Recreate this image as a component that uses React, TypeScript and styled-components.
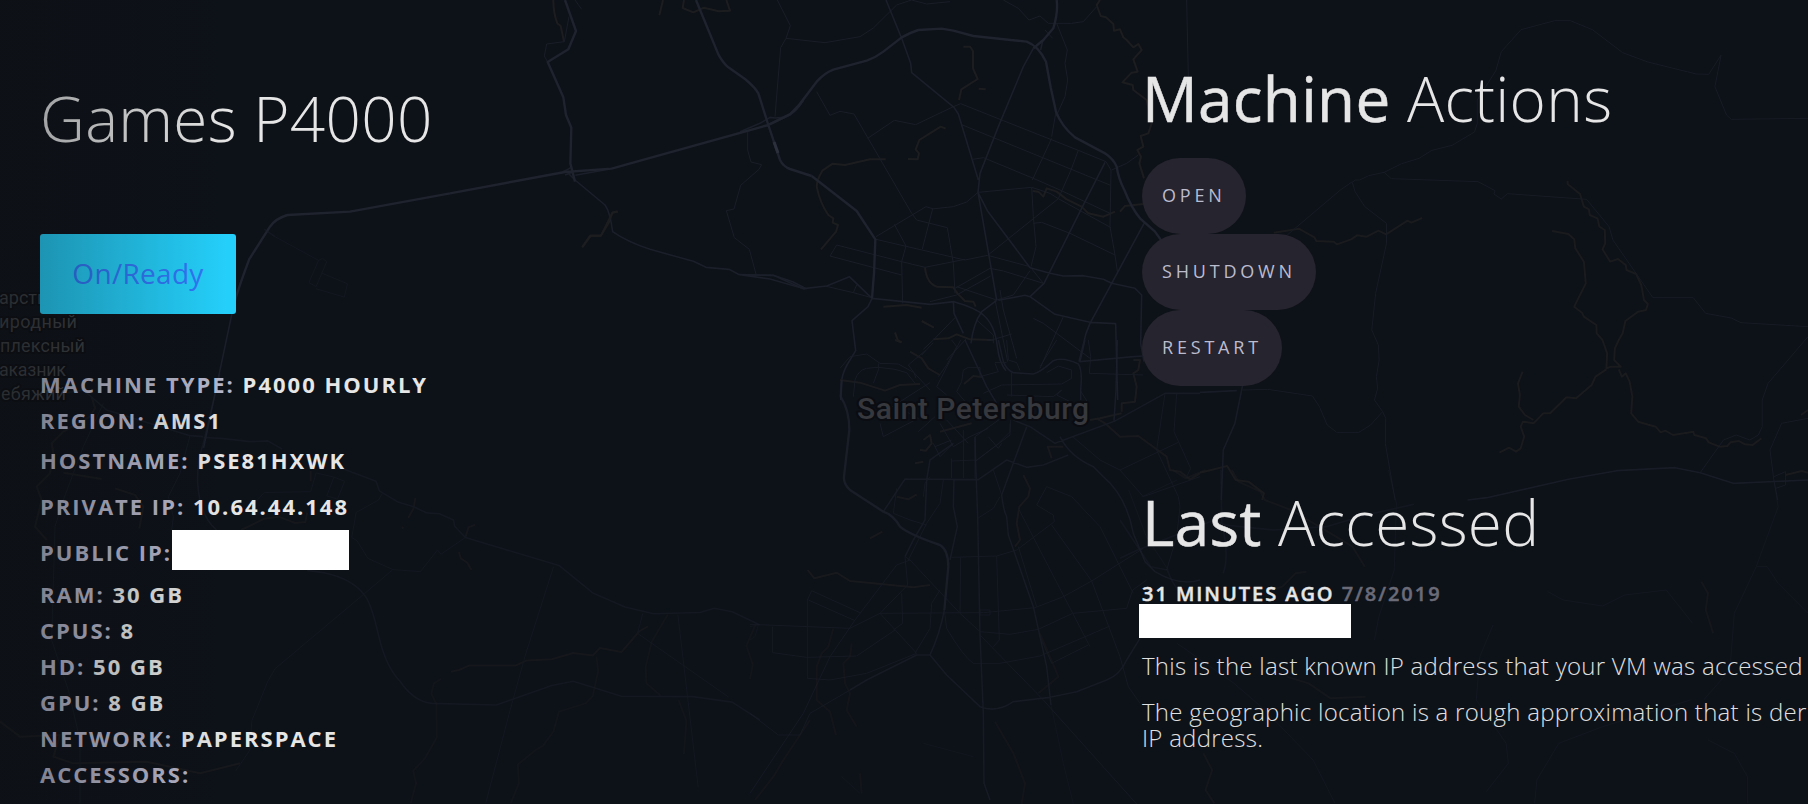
import React from "react";
import styled, { createGlobalStyle } from "styled-components";

const GlobalStyle = createGlobalStyle`
  * { box-sizing: border-box; }
  html, body { margin: 0; padding: 0; background: #0d1118; }
  body { font-family: "Open Sans", "Noto Sans", sans-serif; overflow: hidden; }
`;

const Page = styled.div`
  position: relative;
  display: flex;
  width: 1808px;
  height: 804px;
  overflow: hidden;
  background: #0d1118;
`;

const MapLayer = styled.svg`
  position: absolute;
  inset: 0;
  fill: none;
  stroke-linejoin: round;
  path { vector-effect: non-scaling-stroke; }
`;

const LeftShade = styled.div`
  position: absolute;
  left: 0;
  top: 0;
  bottom: 0;
  width: 230px;
  pointer-events: none;
  background: linear-gradient(to right, rgba(14, 17, 20, 0.38), rgba(14, 17, 20, 0));
`;

const Info = styled.section`
  position: relative;
  width: 1139px;
  padding: 76px 0 0 40px;
`;

const Side = styled.section`
  position: relative;
  width: 669px;
  padding: 56px 0 0 3px;
  overflow: hidden;
`;

const Heading = styled.h1`
  margin: 0;
  font-size: 62px;
  line-height: 84px;
  font-weight: 300;
  letter-spacing: 0.3px;
  color: #e6e6e6;
  white-space: nowrap;
  strong { font-weight: 400; -webkit-text-stroke: 0.5px #e6e6e6; }
`;

const Status = styled.div`
  display: flex;
  align-items: center;
  justify-content: center;
  width: 196px;
  height: 80px;
  margin-top: 74px;
  padding-bottom: 2px;
  border-radius: 3px;
  background: #24d0fb;
  color: #3278fb;
  font-size: 28px;
  letter-spacing: 0.3px;
`;

const Specs = styled.dl`
  margin: 52px 0 0;
`;

const Spec = styled.div<{ $height: number }>`
  display: flex;
  align-items: center;
  height: ${(p) => p.$height}px;
  font-size: 22px;
  font-weight: 700;
  letter-spacing: 2px;
  white-space: pre;
  text-transform: uppercase;
  color: #e6e6e6;
  dt { color: #b7b7cb; }
  dd { margin: 0; }
`;

const Redacted = styled.span<{ $w: number; $h: number }>`
  position: relative;
  z-index: 1;
  display: block;
  width: ${(p) => p.$w}px;
  height: ${(p) => p.$h}px;
  background: #fff;
`;

const PublicIp = styled.span`
  display: block;
  padding-bottom: 5px;
`;

const Actions = styled.div`
  display: flex;
  flex-direction: column;
  align-items: flex-start;
  margin-top: 18px;
`;

const ActionButton = styled.button`
  height: 76px;
  padding: 0 20px 2px;
  border: 0;
  border-radius: 38px;
  background: #26242e;
  color: #bcbccf;
  font: 400 18px/24px "Open Sans", sans-serif;
  letter-spacing: 3.8px;
`;

const Accessed = styled.div`
  margin-top: 94px;
`;

const When = styled.div`
  margin-top: 18px;
  height: 24px;
  font-size: 20px;
  line-height: 24px;
  font-weight: 600;
  letter-spacing: 1.95px;
  text-transform: uppercase;
  color: #e6e6e6;
  white-space: nowrap;
  -webkit-text-stroke: 0.45px currentColor;
  span { color: #6b6b78; }
`;

const AddressSlot = styled.div`
  margin: -2px 0 15px -3px;
`;

const Note = styled.p`
  margin: 0 0 20px;
  font-size: 24px;
  line-height: 26px;
  font-weight: 300;
  letter-spacing: 0.27px;
  color: #e0e0e0;
  white-space: nowrap;
`;

type Tile = {
  x: number;
  y: number;
  sx: number;
  sy: number;
  fade: number;
  major?: string[];
  road?: string[];
  minor?: string[];
  stream?: string[];
};

const tiles: Tile[] = [
  {
    x: 450, y: 0, sx: 3, sy: 3, fade: 1,
    major: [
      "M0 580 L345 516 L485 506 L560 485 L955 375 L1020 343 Q1040 330 1060 300",
      "M345 0 L378 93 L355 148 L293 186 L340 292 L348 345 L364 383 L361 490 L375 545",
      "M738 0 L805 163 Q820 190 835 202 L885 237 Q915 262 925 280 L955 375 L990 480 Q1000 500 1020 507 L1085 528",
    ],
    road: [
      "M345 510 L375 540 L465 615 Q480 635 488 695 Q530 725 600 748 L730 784 L768 802 L837 808 L868 824",
      "M868 824 L970 826 L1028 845 L1070 867",
      "M868 824 L960 837 L1065 867",
      "M376 526 L480 507 M340 516 L362 503 M345 525 L372 515 M340 512 L362 522",
      "M870 395 L930 370 L960 352 L975 354 L1000 352",
    ],
    minor: [
      "M343 125 L290 132 L283 168 L293 186 M343 125 L357 50",
      "M375 0 L395 28",
      "M982 0 L1021 77 L1008 115 L992 143 L975 350",
      "M1008 115 L1125 128 L1230 110 L1270 84 L1340 15 L1385 0 L1430 12 L1500 5",
      "M893 395 L893 450 L903 486 L935 494 L927 508 L872 556 L852 627 L829 632 L853 713 L898 748 L918 822",
      "M1125 858 L1210 878 L1220 855 M1210 878 L1265 893",
    ],
    stream: [
      "M310 0 Q310 40 322 70 L332 78 L342 125",
      "M639 0 L628 46",
      "M702 0 L698 24 L730 37 L762 23 L806 34 L840 32 L829 0",
      "M503 634 L487 638 L478 665 L452 708 L422 708 L397 742",
    ],
  },
  {
    x: 750, y: 0, sx: 3, sy: 3, fade: 1,
    major: [
      "M58 373 L120 343 Q150 315 170 285 L200 245 Q225 218 250 209 L350 182 Q375 174 400 155 L455 112 Q480 98 505 90 L575 86 L610 92 L670 108 L830 125 Q865 138 888 185 L902 262 L918 335 Q935 380 975 412 L1065 460 Q1090 477 1100 500 Q1105 535 1123 570 Q1145 625 1170 655 L1215 695 L1240 730",
      "M920 0 Q925 35 910 85 L880 120 L850 145",
      "M185 528 L320 633 L376 718 L372 820 L366 895",
    ],
    road: [
      "M850 145 L820 200 L745 380 L690 520 L684 577 L712 632 L840 803 M855 140 L878 122 L872 150",
      "M366 895 L354 920 L306 962 L317 1052 L300 1080 Q280 1110 275 1140 L272 1200",
      "M408 0 L455 115 L482 190 L485 218 L612 322 L625 342 L685 540",
      "M684 577 L740 900",
      "M366 895 L540 913 L612 905 Q680 925 700 945 Q735 975 742 1040 Q748 1090 768 1112",
      "M610 905 L612 940 L640 1000",
      "M1185 665 L1085 850 L1020 970 L1008 1000 L987 1085",
      "M745 901 L825 886 L840 890 L915 943 L1020 967 L1097 971 L1103 1200",
      "M840 803 L900 820 L940 828 L1000 827 L1060 838 L1085 850 L1155 865 L1175 885 L1172 1030 L1182 1085",
      "M840 890 L882 850 L990 635 L1065 487",
      "M740 901 L695 935 Q670 970 663 1030",
      "M0 825 L70 826 L160 866 L230 858 L298 830 L366 895",
    ],
    minor: [
      "M684 577 L650 606 L610 620 L545 627",
      "M200 275 L240 346 L270 334 L312 342 L485 640 L500 660 L592 683 L610 790 L615 880",
      "M353 415 L433 361 L497 374 L610 320 L632 311 L760 362 L985 451 L1068 485 L1083 510 L1080 680 L1095 765 L1103 820",
      "M635 374 L878 473 L1082 556",
      "M668 478 L700 473 L850 535 L930 570 L1080 640",
      "M684 577 L845 562 L850 650 L858 740 L843 800",
      "M845 562 L900 580 L925 596 L1083 683",
      "M905 415 L847 540 M918 335 L905 410 M985 451 L963 510 L925 596 L713 766",
      "M713 766 L645 780 L378 718 M713 766 L840 800 L880 850",
      "M378 710 L528 620 L548 626 L517 747 M433 673 L468 738 L455 785 L458 910",
      "M260 735 L455 785 L525 802 L645 778 M260 735 L240 768 L455 825",
      "M615 865 L720 805 L760 813 L880 850 M620 885 L722 828",
      "M540 905 L620 885 M620 860 L740 900",
      "M920 70 L952 150 L945 190 L953 240 L945 290 L918 350",
      "M760 0 L805 25 L837 60 L870 48 L895 70 L965 70 L1000 65 L1040 20 M885 90 L908 115",
      "M850 670 L875 667 L960 700 L1095 765",
      "M1085 510 L1130 490 L1165 465",
      "M750 870 L760 930 L800 1075 M735 900 L773 1085",
      "M940 950 L870 1105 M850 955 L880 970 L920 1000 L1020 1075",
      "M618 950 L550 1020 L520 1048 M650 1015 L590 1080",
      "M680 960 L730 1005 L730 1030 M785 1002 L725 1020",
      "M740 900 L790 885 L840 812",
      "M1310 0 L1315 230",
    ],
    stream: [
      "M640 140 L660 140 L669 153 L669 205 L683 237 L634 268 L627 300 M686 266 L707 268",
      "M587 386 L572 380 L508 420 L497 448 L507 460 L503 478 L474 477",
      "M407 478 L360 478 L285 495 L248 491 L217 512 Q200 540 200 560 Q210 610 235 645 L250 655 L248 668 L264 675 L258 695 L213 748",
      "M525 803 Q530 850 560 860 L610 862 L622 880 L645 903 L670 905 L677 920",
      "M848 573 L865 575 L880 590 L890 565 L920 575 L950 598 L995 620 L1015 640 L1060 650 L1095 635",
      "M1110 635 L1125 618 L1180 612",
      "M1050 0 L1040 15 L1052 48 L1068 52 L1090 72 L1092 92 L1110 88 L1120 112 L1130 120 L1150 142 L1165 132 L1175 150 L1150 178 L1163 215 L1145 218 L1117 247 L1148 255 L1150 270 L1190 300 L1205 370 L1195 400 L1172 408 L1180 440 L1162 450 L1173 470 L1168 490 L1182 535",
      "M515 963 L552 983 M435 997 L443 1020 L455 1027 M400 920 L470 915 L515 923",
      "M550 1018 L595 1015 L620 1003 L660 1018 L725 1020",
    ],
  },
  {
    x: 840, y: 340, sx: 3, sy: 3, fade: 0.9,
    road: [
      "M375 0 L440 140 L470 190",
      "M475 0 L490 65 Q500 90 520 98 L580 102 Q600 98 640 62 Q670 50 715 72 Q728 90 722 150 L722 180",
      "M735 0 L720 65 L880 50 L910 48",
      "M832 0 L828 150 L822 242",
      "M440 0 L462 0",
    ],
    minor: [
      "M0 85 L30 50 L80 42 L120 70 L175 72 L222 98 L228 115",
      "M40 170 L45 120 Q55 90 80 85 L115 82 L165 88 L200 98 L225 130 M115 70 L115 90 L100 130",
      "M280 8 L245 45 L258 30 L205 75 L222 98 L270 150 M362 0 L290 140 L320 165 M335 0 L350 20 L320 75 L295 110",
      "M365 125 L370 90 L385 82 L420 82 L420 110 L475 95 L465 70 M365 125 L350 155 L380 190",
      "M500 0 L505 60 L530 68 L540 92 M465 68 L500 68 M650 0 L600 80",
      "M515 98 L515 170 M430 160 L485 135 L665 132 L695 115 L695 90 L655 78 L620 98 M500 165 L640 170 L665 150 L650 165 L690 185",
      "M745 0 L752 50 L748 100 L910 105 M720 150 L745 190",
      "M120 250 L130 290 L235 235 L190 210 M235 275 L285 230 M110 230 L235 150 L270 128",
      "M280 310 L300 350 L340 310 M285 320 L335 300 M300 250 L340 320 L390 290 L445 265 M320 240 L385 310",
      "M405 290 L405 415 M370 270 L370 415 M335 355 L335 415 M405 290 L490 230 M510 250 L510 285 L405 365",
      "M445 290 L475 325 L485 310",
    ],
    stream: [
      "M165 0 L185 8 M210 35 L245 55 L265 85 L300 105",
      "M372 132 L400 108 L430 112",
      "M0 120 L60 128 L135 152 L180 135 L240 132",
      "M250 300 L270 285 L275 310 L258 332 L240 330 M225 370 L250 365 M300 275 L350 262 L395 250",
      "M880 60 L900 60 L895 90 L880 100 L890 140 L885 185 L845 190 L845 215 M750 240 L780 235 L845 220",
    ],
  },
  {
    x: 750, y: 380, sx: 3, sy: 3, fade: 0.72,
    major: [
      "M275 0 L272 50 Q298 90 298 150 L282 290 Q280 310 300 330 L400 395 Q430 405 450 440 Q480 465 570 495 Q595 510 595 560 L583 690",
    ],
    road: [
      "M583 690 Q570 760 540 825 L500 825 L350 900 L300 930",
      "M540 825 L590 885 L690 980 Q740 1000 790 965 L900 952 L980 935 L1070 900 Q1110 885 1130 840 L1170 775",
      "M400 395 L465 297 L685 299 L770 240 L830 262 L880 255 L955 225",
      "M675 170 L677 250 L683 410 L690 765 L700 1000 L702 1210 L720 1260",
      "M465 530 L490 480 L525 420 L530 300 L540 240 L610 190",
      "M612 297 L610 380 L622 440 L600 540",
      "M830 140 L755 345 Q760 390 770 410 L775 465 L850 680 L890 860 L903 975",
      "M790 120 L840 140 L915 190 L1093 124 L1245 40 L1350 40",
      "M930 170 Q960 230 1030 260 L1060 290 Q1130 350 1150 460 L1185 545 L1215 575 Q1290 620 1350 600",
    ],
    minor: [
      "M465 530 L473 615 L390 700 L300 745 L0 733",
      "M805 500 L860 680 M390 700 L700 698 L855 683 L940 650 L1025 603 L1180 505",
      "M0 1000 L85 1065 L150 1065 L180 1000 L300 930",
      "M690 765 L880 960 L1160 1272",
      "M583 690 L590 745 Q640 830 670 850 L750 850 L870 828 L1080 738",
      "M0 1240 L160 1000 L240 830 L315 720 L440 555 L480 540 L465 530",
      "M480 540 L630 700 L690 755 L780 763 L865 748 L968 700 L1130 685 L1148 630 L1190 600",
      "M605 532 L740 528 L800 510 L913 425 L910 405 L860 375 L890 320 L965 350 L1050 440 L1150 640",
      "M740 528 L748 780 L730 800 M632 532 L630 700",
      "M683 415 L730 385 L750 350 M730 270 L755 345",
      "M185 632 L330 698 M185 632 L172 660 L172 895 L240 900 L350 880 L500 820",
      "M175 660 L315 722 M68 740 L68 818 L170 832 L320 828 L435 750",
      "M390 700 L500 820 M455 640 L458 730 L430 750 M570 630 L545 670 L540 745 L495 820",
      "M805 385 L1020 800 M905 435 L1025 603 L1110 830 L1135 920 L1170 970",
      "M968 170 L1050 240 L1110 270 L1285 187 M1110 270 L1180 350 L1350 290",
      "M1245 40 L1220 210 L1285 350 L1290 380 L1280 470 L1250 570",
      "M1280 40 L1272 155 L1322 265 L1310 290",
      "M605 243 L680 240 L740 195 L780 155 L782 120",
      "M440 325 L430 400 L480 420 L530 435 M520 350 L525 310 L540 290 M580 300 L570 370 L530 430 L475 540",
      "M690 690 L720 690 L720 705 L690 705 Z M868 765 L905 850 L1015 795",
    ],
    stream: [
      "M440 350 L475 358 L500 343 M360 475 L397 455",
      "M820 285 L840 325 L835 350 L808 380 L800 430 L810 480 L795 500",
      "M173 570 L193 595 L260 578 L300 603 L370 610 L490 622 L540 615",
      "M1040 115 L1065 130 L1110 170 L1165 168 L1250 230 L1260 270 L1290 275 L1320 298 L1350 280",
      "M905 235 L893 200 L940 200",
    ],
  },
  {
    x: 750, y: 380, sx: 3, sy: 3, fade: 0.4,
    minor: [
      "M0 740 L25 735 L15 770 L0 780 M275 1190 L330 1240",
      "M900 960 L940 1150 L970 1272 M520 1090 L670 1130",
    ],
    stream: [
      "M250 745 L235 800 L215 820 L200 860 L200 960 L240 995 L258 1065",
      "M305 790 L300 830 L280 850 L285 910 L300 940 L290 990 L320 1040",
      "M870 760 L925 890 L865 940 M735 1025 L790 1120 L825 1210 L815 1272",
      "M180 1020 L100 1140 L70 1190 L15 1260 M330 1180 L335 1240",
    ],
  },
  {
    x: 1200, y: 0, sx: 2.579, sy: 3, fade: 0.85,
    road: [
      "M690 1500 L740 1493 L950 1438 L1075 1412 L1225 1403 L1290 1418 L1375 1450 L1568 1440",
      "M110 1155 L90 1270 L60 1350 L55 1500 M0 1177 L95 1172",
    ],
    minor: [
      "M393 545 L362 570 L225 705 L160 740 L80 900",
      "M1568 355 L1370 358 L1358 345 L1328 260 L1344 165 L1312 223 L1280 222 L1155 186 L1090 158 L1012 89 L955 62 L915 62 L828 89 L777 155 L763 212 L715 300 L715 370 L708 396 L650 436 L598 451 L565 475 L520 491 L475 517 L435 527 L412 540 L400 540 L393 548 L400 575 L425 620 L481 670 L481 730 L453 880 L443 990 L460 1035 L462 1080 L455 1130 L458 1165 L450 1200 L471 1235 L479 1255 L478 1330 L503 1500",
      "M475 517 L493 536 L717 545 L761 572 L758 582 L777 597 L793 581 L997 598 L1055 680 L1065 720 L1168 893 L1272 893 L1304 940 L1370 954 L1395 968 L1568 980",
      "M1568 1010 L1465 1150 L1450 1200 L1450 1280 L1440 1305 L1418 1320 L1383 1305 L1350 1320 L1290 1418",
      "M110 1170 L175 1168 L290 1188 L308 1220 L328 1275 L353 1297 L410 1297 L440 1275 L471 1235",
      "M1568 1255 L1500 1270 L1470 1350 L1480 1440 L1490 1500 M1480 1430 L1510 1415 L1510 1455 L1485 1465",
    ],
    stream: [
      "M190 698 L255 686 L295 712 L300 723 L345 725 L353 733 L390 718 L405 706 L430 710 L460 692 L480 703 L535 662 L545 668 L573 654",
      "M948 542 L948 552 L980 582 L990 620 L1003 628 L1005 645 L1025 655 L1030 680 L1044 690 L1045 730 L1038 748 L1058 785 L1078 777 L1098 795 L1100 810 L1125 822 L1138 855 L1145 900 L1155 912 L1150 930 L1130 935 L1097 963 L1090 1000 L1080 1020 L1070 1045 L1068 1080 L1085 1100 L1060 1100 L1048 1105 L1050 1060 L1038 1020 L1023 1000 L1022 975 L990 950 L985 938 L965 920 L995 850 L990 785 L968 745 L965 718 L950 702 L908 693",
      "M1048 1108 L1020 1130 L1010 1155 L970 1195 L945 1192 L903 1240 L885 1240 L860 1270 L833 1265 L827 1280 L836 1310 L827 1345 L815 1355 L797 1343 L772 1358 M860 1260 L838 1245 L822 1220 L825 1185 L820 1150 L832 1115",
      "M1080 1108 L1088 1130 L1098 1120 L1108 1145 L1115 1190 L1112 1240 L1130 1265 L1175 1280 L1188 1297 L1200 1292 L1220 1305 L1272 1295 L1275 1305 L1305 1315 L1312 1327 L1340 1340 L1360 1338 L1368 1327 L1390 1323 L1405 1333 L1425 1335 L1448 1315",
      "M0 1418 L70 1398 L92 1440 L125 1445 L165 1480 L160 1500 M1550 1245 L1568 1230 M1510 1425 L1552 1413 L1568 1418",
    ],
  },
  {
    x: 1120, y: 470, sx: 2.279, sy: 3, fade: 0.5,
    road: [
      "M240 165 L350 180 L470 170 L560 135 L670 103",
      "M230 0 L232 160 Q250 260 235 310 M0 265 L40 240 L215 150 L240 165",
      "M0 150 L70 290 L108 300 Q130 380 170 395",
    ],
    minor: [
      "M612 0 L630 100 L625 300 L590 440 L580 510",
      "M1490 30 L1500 110 L1450 290 L1475 290 L1500 340 L1568 430 M1450 290 L1400 430 L1390 600 L1330 690",
      "M975 365 L1010 390 L1100 408 L1150 375 L1245 360 L1305 460",
      "M850 465 L820 560 L812 690 L880 820 L885 880 L835 965",
      "M1300 690 L1100 770 L1000 820 L950 930 L945 1000",
      "M1340 810 L1400 850 L1430 920 L1430 1000 M130 520 L260 640 L330 720 L440 870 L490 1000",
      "M20 60 L60 200 L110 300 M50 80 L130 30",
    ],
    stream: [
      "M120 0 L150 25 L195 0 M255 0 L270 35 L320 65 L330 90 L390 120 L480 190 L530 230 L558 290",
      "M425 305 L400 310 L370 350 L345 360 M1325 335 L1340 370 L1335 420 L1352 490",
      "M380 620 L430 640 L480 685 L560 680 M190 850 L210 900 L195 960 L215 1000",
    ],
  },
  {
    x: 200, y: 150, sx: 2.8, sy: 2.4, fade: 1,
    major: [
      "M700 104 L420 148 L245 156 Q210 165 195 185 L138 262 Q110 325 95 370",
    ],
    road: ["M95 370 L10 715"],
    stream: ["M1170 148 L1155 150 L1123 205 L1093 205 L1070 233"],
  },
  {
    x: 200, y: 150, sx: 2.8, sy: 2.4, fade: 0.55,
    road: [
      "M300 1009 L350 1015 Q430 1030 462 1070 Q480 1090 500 1165 Q520 1240 560 1275 Q600 1325 650 1328 L830 1332 L985 1285 L1045 1275 L1180 1311 L1380 1312 L1490 1325 L1568 1368",
      "M400 765 L493 795 L502 818 L555 845 L600 857 L635 871 L670 873 L710 888 L713 903 L743 930 L1005 997 L1100 1063 L1190 1097 L1270 1113 L1400 1110 L1440 1100 L1490 1108 L1568 1140",
      "M10 690 L60 692 L140 700 L190 698 L230 718",
      "M180 190 L210 208",
    ],
    minor: [
      "M210 208 L332 265 L305 318 L325 328 L355 268 L343 260 L332 265 M340 295 L413 321 L404 353 L325 333",
      "M425 930 L440 938 L470 980 L540 1007 L617 1012 L665 960 L675 970 L743 930",
      "M540 1007 L460 1065 L210 1245 L190 1275 L145 1370 L140 1440 L100 1490",
      "M325 775 L310 820 L180 822 L150 850 M325 775 L375 785 L355 830 L385 838 L405 795 L375 785 M437 870 L500 840 L510 825 M437 870 L425 930",
      "M990 1000 L910 1215 L865 1355 L800 1568",
      "M1338 1115 L1395 1530 M1240 1112 L1225 1160 L1350 1235 L1480 1313",
    ],
    stream: [
      "M603 835 L598 860 L583 883 M565 905 L570 908 M770 900 L752 905 L743 930 M725 965 L730 980 L748 990 L760 1008",
      "M703 1252 L725 1248 L755 1237 L885 1237 L915 1225 L985 1222 L1045 1207 L1100 1213 L1120 1195 L1180 1205 L1230 1155 L1255 1143",
      "M310 770 L310 795 M115 912 L180 885 L220 880 L265 895 L295 893 L300 870",
    ],
  },
  {
    x: 200, y: 150, sx: 2.8, sy: 2.4, fade: 0.35,
    stream: [
      "M675 1270 L655 1280 L648 1305 L662 1330 L663 1410 L630 1460 L597 1490 L605 1520 L590 1568",
      "M1110 1215 L1115 1250 L1100 1310 L1080 1328 L1005 1348 L990 1395 L960 1430 L940 1440 L890 1475 L893 1520 L870 1568",
      "M1310 1115 L1265 1180 L1248 1240 L1250 1280 L1290 1310 M1340 1320 L1362 1370 L1355 1450",
      "M1555 1140 L1530 1190 L1548 1235 L1540 1270",
    ],
  },
  {
    x: 0, y: 340, sx: 3, sy: 3, fade: 0.6,
    road: [
      "M660 100 L610 310 Q590 370 593 430 Q600 530 650 570",
      "M610 290 L570 287 L320 210 L250 150 L160 165",
    ],
    minor: [
      "M570 287 L540 400 L505 470 L520 530 L515 572",
      "M310 190 L250 320 L190 480 L165 560 L155 900 L205 1050 L240 1200 L240 1390",
    ],
    stream: [
      "M275 170 L285 205 L270 230 L190 275 L155 310 L160 340 L150 400 L110 440 L125 480 L105 560 L140 600",
      "M190 398 L305 417 M345 445 L405 465 L430 500 L418 565",
      "M0 1145 L60 1190 L180 1185 L160 1250 L220 1270 L440 1265 L600 1300 L720 1270",
    ],
  },
];

const layers = [
  { key: "stream", color: "#1c1d1f", width: 2 },
  { key: "minor", color: "#191e27", width: 1 },
  { key: "road", color: "#1a1f29", width: 1.6 },
  { key: "major", color: "#1f232e", width: 2.4 },
] as const;

const MapBackground = () => (
  <MapLayer width="1808" height="804" viewBox="0 0 1808 804">
    {tiles.map((t, i) => (
      <g key={i} opacity={t.fade} transform={`translate(${t.x} ${t.y}) scale(${1 / t.sx} ${1 / t.sy})`}>
        {layers.map((l) => (
          <path key={l.key} d={(t[l.key] ?? []).join(" ")} stroke={l.color} strokeWidth={l.width} />
        ))}
      </g>
    ))}
    <path d="M774 142 L778 153" stroke="#2c303c" strokeWidth="3" />
    <g
      fontFamily="Roboto, 'Noto Sans', sans-serif"
      stroke="#0a0c11"
      strokeWidth="4"
      paintOrder="stroke"
    >
      <g fontSize="18" fill="#3c3e42">
        <text x="-1" y="304">арств</text>
        <text x="77" y="328" textAnchor="end" textLength="78">иродный</text>
        <text x="85" y="352" textAnchor="end" textLength="85">плексный</text>
        <text x="66" y="376" textAnchor="end" textLength="67">аказник</text>
        <text x="66" y="400" textAnchor="end" textLength="65">ебяжий</text>
      </g>
      <text x="857" y="418.5" fontSize="30" fontWeight="500" fill="#36383d" textLength="232">
        Saint Petersburg
      </text>
    </g>
  </MapLayer>
);

const specs = [
  { label: "Machine type:", value: "P4000 hourly", height: 36 },
  { label: "Region:", value: "AMS1", height: 36 },
  { label: "Hostname:", value: "PSE81HXWK", height: 44 },
  { label: "Private IP:", value: "10.64.44.148", height: 48 },
  { label: "Public IP:", value: null, height: 44 },
  { label: "RAM:", value: "30 GB", height: 40 },
  { label: "CPUs:", value: "8", height: 32 },
  { label: "HD:", value: "50 GB", height: 40 },
  { label: "GPU:", value: "8 GB", height: 32 },
  { label: "Network:", value: "Paperspace", height: 40 },
  { label: "Accessors:", value: "", height: 32 },
];

export default function App() {
  return (
    <>
      <GlobalStyle />
      <Page>
        <MapBackground />
        <Info>
          <Heading>Games P4000</Heading>
          <Status>On/Ready</Status>
          <Specs>
            {specs.map((s) => (
              <Spec key={s.label} $height={s.height}>
                <dt>{s.label}</dt>
                <dd>
                  {s.value === null ? (
                    <PublicIp>
                      <Redacted $w={177} $h={40} />
                    </PublicIp>
                  ) : (
                    " " + s.value
                  )}
                </dd>
              </Spec>
            ))}
          </Specs>
        </Info>
        <Side>
          <Heading>
            <strong>Machine</strong> Actions
          </Heading>
          <Actions>
            <ActionButton>OPEN</ActionButton>
            <ActionButton>SHUTDOWN</ActionButton>
            <ActionButton>RESTART</ActionButton>
          </Actions>
          <Accessed>
            <Heading>
              <strong>Last</strong> Accessed
            </Heading>
            <When>
              31 minutes ago <span>7/8/2019</span>
            </When>
            <AddressSlot>
              <Redacted $w={212} $h={34} />
            </AddressSlot>
            <Note>This is the last known IP address that your VM was accessed</Note>
            <Note>
              The geographic location is a rough approximation that is der
              <br />
              IP address.
            </Note>
          </Accessed>
        </Side>
        <LeftShade />
      </Page>
    </>
  );
}
